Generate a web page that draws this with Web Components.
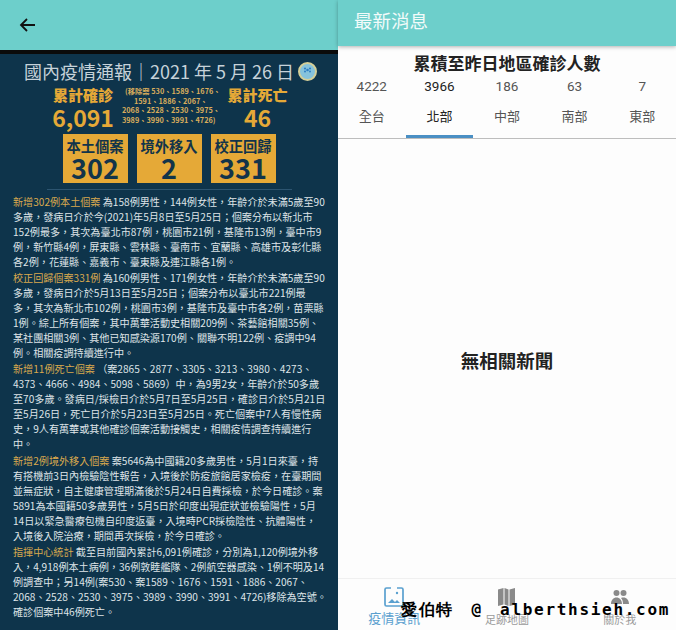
<!DOCTYPE html>
<html lang="zh-Hant">
<head>
<meta charset="utf-8">
<style>
html,body{margin:0;padding:0;background:#fff;}
body{width:676px;height:630px;overflow:hidden;font-family:"Noto Sans CJK TC","Noto Sans",sans-serif;}
</style>
</head>
<body>
<app-shell>
  <report-screen slot="left"></report-screen>
  <news-screen slot="right"></news-screen>
</app-shell>
<script>
const CJK = '"Noto Sans CJK TC","Noto Sans",sans-serif';

class AppShell extends HTMLElement{
    constructor(){
        super();
        this.attachShadow({mode:'open'});
        this.shadowRoot.innerHTML = `
            <style>
                :host{display:grid;grid-template-columns:338px 338px;width:676px;height:630px;overflow:hidden;}
            </style>
            <slot name="left"></slot>
            <slot name="right"></slot>
        `;
    }
}
customElements.define('app-shell', AppShell);

class StatBox extends HTMLElement{
    constructor(){
        super();
        this.attachShadow({mode:'open'});
        this.shadowRoot.innerHTML = `
            <style>
                :host{display:flex;flex-direction:column;align-items:center;width:65px;height:49px;background:#e5a937;color:#12344a;font-weight:700;}
                .l{font-size:14.3px;line-height:16px;margin-top:4px;white-space:nowrap;}
                .n{font-size:27px;line-height:28px;margin-top:0;}
            </style>
            <div class="l">${this.getAttribute('label')}</div>
            <div class="n">${this.getAttribute('num')}</div>
        `;
    }
}
customElements.define('stat-box', StatBox);

class ReportPara extends HTMLElement{
    constructor(){
        super();
        this.attachShadow({mode:'open'});
        this.shadowRoot.innerHTML = `
            <style>
                :host{display:block;font-size:10.1px;line-height:15px;color:#dfe4e8;white-space:nowrap;margin-bottom:1.2px;}
                .h{color:#d9a94e;}
            </style>
            <span class="h">${this.getAttribute('head')}</span> <slot></slot>
        `;
    }
}
customElements.define('report-para', ReportPara);

class ReportScreen extends HTMLElement{
    constructor(){
        super();
        this.attachShadow({mode:'open'});
        this.shadowRoot.innerHTML = `
            <style>
                :host{display:flex;flex-direction:column;height:630px;background:#0e344b;font-family:${CJK};}
                .bar{height:50px;background:#6dcfcb;border-bottom:4px solid #0b0b0b;display:flex;align-items:center;padding-left:19px;flex:none;}
                .title{display:flex;align-items:center;gap:4px;color:#c6d2d9;font-size:18px;line-height:24px;margin-top:5px;padding-left:24px;white-space:nowrap;}
                .seal{display:block;flex:none;}
                .sum{display:flex;color:#e5a937;font-weight:700;margin-top:3px;height:41px;padding-left:53px;}
                .stat{display:flex;flex-direction:column;align-items:center;width:60px;}
                .stat b{font-size:15px;line-height:17px;white-space:nowrap;}
                .stat i{font-style:normal;font-size:23px;line-height:26px;margin-top:1px;}
                .note{font-size:7.3px;line-height:9.7px;width:96px;margin:1px 9.5px 0 9px;white-space:nowrap;color:#d9ad5c;}
                .note span{display:block;}
                .boxes{display:flex;justify-content:center;gap:9px;margin-top:7px;}
                hr{border:0;height:1px;background:#2c5470;margin:6px 46px 4px 47px;}
                .body{padding-left:13px;}
            </style>
            <div class="bar">
                <svg width="16" height="14" viewBox="0 0 16 14" fill="none" stroke="#111" stroke-width="1.8"><path d="M16 7H2M8 1 2 7l6 6"/></svg>
            </div>
            <div class="title">
                <span>國內疫情通報｜2021 年 5 月 26 日</span>
                <svg class="seal" width="19" height="19" viewBox="0 0 19 19">
                    <circle cx="9.500" cy="9.500" r="8.500" fill="#86c3dc" stroke="#d4cf98" stroke-width="2"/>
                    <g fill="#2f7fc4"><circle cx="7" cy="6.500" r="1.100"/><circle cx="12" cy="6.500" r="1.100"/><circle cx="9.500" cy="8" r="1.300"/><circle cx="7" cy="9.500" r="1"/><circle cx="12" cy="9.500" r="1"/></g>
                </svg>
            </div>
            <div class="sum">
                <div class="stat"><b>累計確診</b><i>6,091</i></div>
                <div class="note">
                    <span style="padding-left:3px">(移除案 530、1589、1676、</span>
                    <span style="padding-left:12px">1591、1886、2067、</span>
                    <span>2068、2528、2530、3975、</span>
                    <span>3989、3990、3991、4726)</span>
                </div>
                <div class="stat"><b>累計死亡</b><i>46</i></div>
            </div>
            <div class="boxes">
                <stat-box label="本土個案" num="302"></stat-box>
                <stat-box label="境外移入" num="2"></stat-box>
                <stat-box label="校正回歸" num="331"></stat-box>
            </div>
            <hr>
            <div class="body">
                <report-para head="新增302例本土個案">為158例男性，144例女性，年齡介於未滿5歲至90<br>多歲，發病日介於今(2021)年5月8日至5月25日；個案分布以新北市<br>152例最多，其次為臺北市87例，桃園市21例，基隆市13例，臺中市9<br>例，新竹縣4例，屏東縣、雲林縣、臺南市、宜蘭縣、高雄市及彰化縣<br>各2例，花蓮縣、嘉義市、臺東縣及連江縣各1例。</report-para>
                <report-para head="校正回歸個案331例">為160例男性、171例女性，年齡介於未滿5歲至90<br>多歲，發病日介於5月13日至5月25日；個案分布以臺北市221例最<br>多，其次為新北市102例，桃園市3例，基隆市及臺中市各2例，苗栗縣<br>1例。綜上所有個案，其中萬華活動史相關209例、茶藝館相關35例、<br>某社團相關3例、其他已知感染源170例、關聯不明122例、疫調中94<br>例。相關疫調持續進行中。</report-para>
                <report-para head="新增11例死亡個案">（案2865、2877、3305、3213、3980、4273、<br>4373、4666、4984、5098、5869）中，為9男2女，年齡介於50多歲<br>至70多歲。發病日/採檢日介於5月7日至5月25日，確診日介於5月21日<br>至5月26日，死亡日介於5月23日至5月25日。死亡個案中7人有慢性病<br>史，9人有萬華或其他確診個案活動接觸史，相關疫情調查持續進行<br>中。</report-para>
                <report-para head="新增2例境外移入個案">案5646為中國籍20多歲男性，5月1日來臺，持<br>有搭機前3日內檢驗陰性報告，入境後於防疫旅館居家檢疫，在臺期間<br>並無症狀，自主健康管理期滿後於5月24日自費採檢，於今日確診。案<br>5891為本國籍50多歲男性，5月5日於印度出現症狀並檢驗陽性，5月<br>14日以緊急醫療包機自印度返臺，入境時PCR採檢陰性、抗體陽性，<br>入境後入院治療，期間再次採檢，於今日確診。</report-para>
                <report-para head="指揮中心統計">截至目前國內累計6,091例確診，分別為1,120例境外移<br>入，4,918例本土病例，36例敦睦艦隊、2例航空器感染、1例不明及14<br>例調查中；另14例(案530、案1589、1676、1591、1886、2067、<br>2068、2528、2530、3975、3989、3990、3991、4726)移除為空號。<br>確診個案中46例死亡。</report-para>
            </div>
        `;
    }
}
customElements.define('report-screen', ReportScreen);

class RegionTabs extends HTMLElement{
    constructor(){
        super();
        this.attachShadow({mode:'open'});
        const rows = [['4222','全台'],['3966','北部'],['186','中部'],['63','南部'],['7','東部']];
        this.shadowRoot.innerHTML = `
            <style>
                :host{display:grid;grid-template-columns:repeat(5,1fr);border-bottom:1px solid #bdbdbd;height:62px;box-sizing:border-box;}
                .t{display:flex;flex-direction:column;align-items:center;color:#555;height:61px;box-sizing:border-box;}
                .t.on{color:#222;border-bottom:3px solid #4a8fc4;}
                .n{font-family:"Roboto",sans-serif;font-size:13.5px;line-height:18px;}
                .l{font-size:13px;line-height:18px;margin-top:12px;}
            </style>
            ${rows.map((r,i)=>`<div class="t ${i==1?'on':''}"><div class="n">${r[0]}</div><div class="l">${r[1]}</div></div>`).join('')}
        `;
    }
}
customElements.define('region-tabs', RegionTabs);

class NavItem extends HTMLElement{
    constructor(){
        super();
        this.attachShadow({mode:'open'});
        this.shadowRoot.innerHTML = `
            <style>
                :host{display:flex;flex-direction:column;align-items:center;color:#9a9a9a;font-size:11px;line-height:13px;}
                :host([active]){color:#5aa0cf;font-size:13px;}
                .ic{height:20px;display:flex;align-items:center;}
                .lb{margin-top:6px;}
                :host([active]) .lb{margin-top:4px;}
            </style>
            <div class="ic"><slot></slot></div>
            <div class="lb">${this.getAttribute('label')}</div>
        `;
    }
}
customElements.define('nav-item', NavItem);

class NewsScreen extends HTMLElement{
    constructor(){
        super();
        this.attachShadow({mode:'open'});
        this.shadowRoot.innerHTML = `
            <style>
                :host{display:flex;flex-direction:column;height:630px;background:#fdfdfd;font-family:${CJK};position:relative;}
                .bar{height:46px;background:#6dcfcb;box-shadow:0 1px 4px rgba(0,0,0,.3);color:#f2fbfa;font-size:18.5px;display:flex;align-items:center;padding:0 0 6px 16px;box-sizing:border-box;flex:none;}
                h2{margin:6px 0 0;font-size:17px;line-height:22px;text-align:center;color:#222;font-weight:700;}
                region-tabs{margin-top:3px;}
                .empty{flex:1;display:flex;align-items:center;justify-content:center;font-size:18.5px;font-weight:700;color:#222;padding-top:2px;}
                nav{height:52px;flex:none;border-top:1px solid #f0f0f0;display:grid;grid-template-columns:repeat(3,1fr);padding-top:8px;box-sizing:border-box;}
                .wm{position:absolute;left:63px;top:600px;font-family:"DejaVu Sans Mono",monospace;font-size:16px;font-weight:700;line-height:20px;letter-spacing:1.7px;word-spacing:6px;color:#000;white-space:nowrap;}
            </style>
            <div class="bar">最新消息</div>
            <h2>累積至昨日地區確診人數</h2>
            <region-tabs></region-tabs>
            <div class="empty">無相關新聞</div>
            <nav>
                <nav-item label="疫情資訊" active>
                    <svg width="20" height="20" viewBox="0 0 20 20" fill="none" stroke="#5aa0cf" stroke-width="1.700"><path d="M7 1H2.500A1.500 1.500 0 0 0 1 2.500v15A1.500 1.500 0 0 0 2.500 19h15a1.500 1.500 0 0 0 1.500-1.500v-15A1.500 1.500 0 0 0 17.500 1H13"/><circle cx="13" cy="6" r="1.200" fill="#5aa0cf" stroke="none"/><path d="M4 16l4-4 3 3 2-2 3 3z" fill="#5aa0cf" stroke="none"/></svg>
                </nav-item>
                <nav-item label="足跡地圖">
                    <svg width="17" height="18" viewBox="0 0 17 18" fill="#8a8a8a"><path d="M0 1.500 5.500 0v16.500L0 18zM6.500 0l4 1.500V18l-4-1.500zM11.500 1.500 17 0v16.500L11.500 18z"/></svg>
                </nav-item>
                <nav-item label="關於我">
                    <svg width="18" height="14" viewBox="0 0 18 14" fill="#8a8a8a"><circle cx="5.500" cy="3" r="3"/><circle cx="12.500" cy="3" r="3"/><path d="M0 14c0-4 2.500-6.500 5.500-6.500S11 10 11 14zM12 14c0-2.500-.6-4.600-2-6 .8-.4 1.700-.5 2.500-.5 3 0 5.500 2.500 5.500 6.500z"/></svg>
                </nav-item>
            </nav>
            <div class="wm">愛伯特 @ alberthsieh.com</div>
        `;
    }
}
customElements.define('news-screen', NewsScreen);
</script>
</body>
</html>
